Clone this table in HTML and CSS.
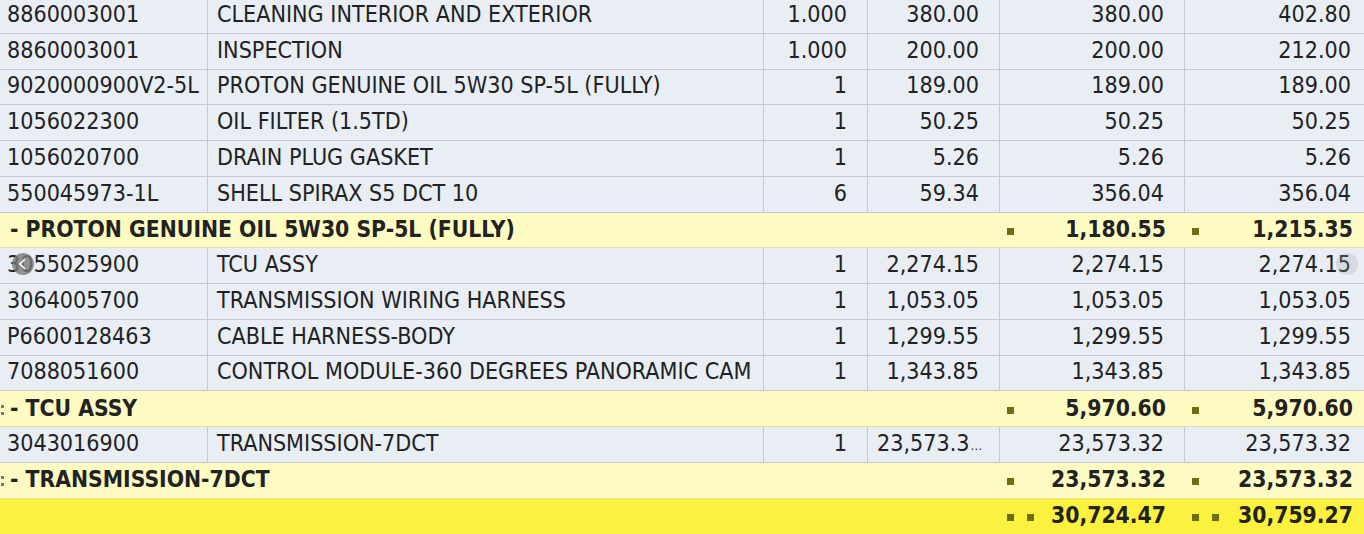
FILE: index.html
```html
<!DOCTYPE html>
<html>
<head>
<meta charset="utf-8">
<link rel="stylesheet" href="styles.css">
</head>
<body>
<div class="viewport">
  <div class="grid">
    <div class="row item"><div class="c c1">8860003001</div><div class="c c2">CLEANING INTERIOR AND EXTERIOR</div><div class="c num">1.000</div><div class="c num">380.00</div><div class="c num">380.00</div><div class="c num">402.80</div></div>
    <div class="row item"><div class="c c1">8860003001</div><div class="c c2">INSPECTION</div><div class="c num">1.000</div><div class="c num">200.00</div><div class="c num">200.00</div><div class="c num">212.00</div></div>
    <div class="row item"><div class="c c1">9020000900V2-5L</div><div class="c c2">PROTON GENUINE OIL 5W30 SP-5L (FULLY)</div><div class="c num">1</div><div class="c num">189.00</div><div class="c num">189.00</div><div class="c num">189.00</div></div>
    <div class="row item"><div class="c c1">1056022300</div><div class="c c2">OIL FILTER (1.5TD)</div><div class="c num">1</div><div class="c num">50.25</div><div class="c num">50.25</div><div class="c num">50.25</div></div>
    <div class="row item"><div class="c c1">1056020700</div><div class="c c2">DRAIN PLUG GASKET</div><div class="c num">1</div><div class="c num">5.26</div><div class="c num">5.26</div><div class="c num">5.26</div></div>
    <div class="row item"><div class="c c1">550045973-1L</div><div class="c c2">SHELL SPIRAX S5 DCT 10</div><div class="c num">6</div><div class="c num">59.34</div><div class="c num">356.04</div><div class="c num">356.04</div></div>
    <div class="row sub"><div class="s label">- PROTON GENUINE OIL 5W30 SP-5L (FULLY)</div><div class="s sum"><span class="dot"></span><span>1,180.55</span></div><div class="s sum"><span class="dot"></span><span>1,215.35</span></div></div>
    <div class="row item"><div class="c c1">3055025900</div><div class="c c2">TCU ASSY</div><div class="c num">1</div><div class="c num">2,274.15</div><div class="c num">2,274.15</div><div class="c num">2,274.15</div></div>
    <div class="row item"><div class="c c1">3064005700</div><div class="c c2">TRANSMISSION WIRING HARNESS</div><div class="c num">1</div><div class="c num">1,053.05</div><div class="c num">1,053.05</div><div class="c num">1,053.05</div></div>
    <div class="row item"><div class="c c1">P6600128463</div><div class="c c2">CABLE HARNESS-BODY</div><div class="c num">1</div><div class="c num">1,299.55</div><div class="c num">1,299.55</div><div class="c num">1,299.55</div></div>
    <div class="row item"><div class="c c1">7088051600</div><div class="c c2">CONTROL MODULE-360 DEGREES PANORAMIC CAM</div><div class="c num">1</div><div class="c num">1,343.85</div><div class="c num">1,343.85</div><div class="c num">1,343.85</div></div>
    <div class="row sub"><div class="s label"><span class="cut"></span>- TCU ASSY</div><div class="s sum"><span class="dot"></span><span>5,970.60</span></div><div class="s sum"><span class="dot"></span><span>5,970.60</span></div></div>
    <div class="row item"><div class="c c1">3043016900</div><div class="c c2">TRANSMISSION-7DCT</div><div class="c num">1</div><div class="c ell">23,573.3<span class="dots">…</span></div><div class="c num">23,573.32</div><div class="c num">23,573.32</div></div>
    <div class="row sub"><div class="s label"><span class="cut"></span>- TRANSMISSION-7DCT</div><div class="s sum"><span class="dot"></span><span>23,573.32</span></div><div class="s sum"><span class="dot"></span><span>23,573.32</span></div></div>
    <div class="row total"><div class="s label"></div><div class="s sum"><span class="dot"></span><span class="dot d2"></span><span>30,724.47</span></div><div class="s sum"><span class="dot"></span><span class="dot d2"></span><span>30,759.27</span></div></div>
  </div>
  <div class="nav nav-left"><svg width="10" height="12" viewBox="0 0 10 12"><path d="M7 1 L2 6 L7 11" fill="none" stroke="#ffffff" stroke-width="1.6"/></svg></div>
  <div class="nav nav-right"></div>
</div>
</body>
</html>
```
FILE: styles.css
```css
html, body {
  margin: 0;
  padding: 0;
  background: #e9eef5;
  overflow: hidden;
}
.viewport {
  position: relative;
  width: 1364px;
  height: 534px;
  overflow: hidden;
}
.grid {
  margin-top: -2px;
  width: 1372px;
  font-family: "DejaVu Sans Condensed", "DejaVu Sans", sans-serif;
  font-stretch: condensed;
  font-size: 23.1px;
  color: #222222;
}
.row {
  display: grid;
  height: 35.75px;
  box-sizing: border-box;
  border-bottom: 1px solid #c4cad4;
}
.item {
  grid-template-columns: 208px 556px 104px 132px 185px 187px;
  background: #e9eef5;
}
.c {
  box-sizing: border-box;
  border-right: 1px solid #c4cad4;
  display: flex;
  align-items: center;
  white-space: nowrap;
  overflow: hidden;
  padding-bottom: 3px;
}
.c1 { padding-left: 7px; }
.c2 { padding-left: 9px; }
.num {
  justify-content: flex-end;
  padding-right: 20px;
}
.ell {
  padding-left: 9px;
}
.dots {
  font-size: 13px;
  align-self: flex-end;
  margin-bottom: 6px;
  margin-left: 1px;
}
.sub, .total {
  grid-template-columns: 1000px 185px 187px;
  font-weight: bold;
  font-size: 22.7px;
}
.sub {
  background: #fdfbc2;
  border-bottom-color: #e3dfa6;
}
.total {
  background: #fcf13e;
  border-bottom: none;
}
.s {
  display: flex;
  align-items: center;
  white-space: nowrap;
  overflow: hidden;
  padding-bottom: 2px;
}
.label {
  padding-left: 10px;
}
.cut {
  margin-left: -9px;
  margin-right: 6px;
  width: 3px;
  height: 10px;
  margin-top: 4px;
  background: repeating-linear-gradient(to bottom, #777 0 3px, transparent 3px 7px);
}
.sum {
  padding-left: 7px;
  padding-right: 19px;
}
.sum span:last-child {
  margin-left: auto;
}
.dot {
  display: inline-block;
  width: 7px;
  height: 7px;
  background: #6d6d16;
  margin-top: 5px;
}
.d2 {
  margin-left: 13px;
}
.nav {
  position: absolute;
  top: 253px;
  width: 22px;
  height: 22px;
  border-radius: 50%;
  display: flex;
  align-items: center;
  justify-content: center;
}
.nav-left {
  left: 12px;
  background: rgba(120, 120, 120, 0.8);
}
.nav-right {
  left: 1336px;
  background: rgba(160, 160, 160, 0.25);
}
```
